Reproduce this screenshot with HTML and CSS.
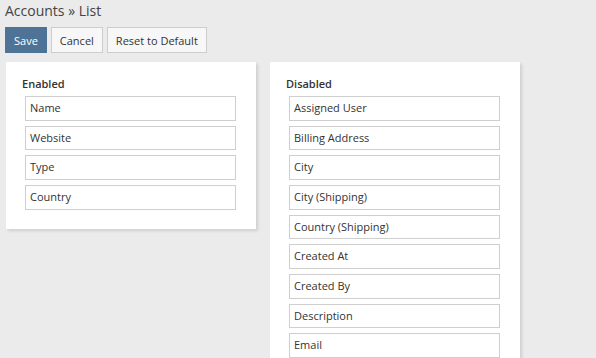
FILE: index.html
```html
<!DOCTYPE html>
<html lang="en">
<head>
  <meta charset="UTF-8" />
  <title>Accounts » List</title>
  <link rel="stylesheet" href="styles.css">
</head>
<body>

  <h1 class="page-title">Accounts &raquo; List</h1>

  <div class="btn-bar">
    <button class="btn btn-primary">Save</button>
    <button class="btn">Cancel</button>
    <button class="btn">Reset to Default</button>
  </div>

  <div class="layout-panels">
    <div class="panel">
      <h5 class="panel-label">Enabled</h5>
      <ul class="field-list">
        <li>Name</li>
        <li>Website</li>
        <li>Type</li>
        <li>Country</li>
      </ul>
    </div>

    <div class="panel panel-long">
      <h5 class="panel-label">Disabled</h5>
      <ul class="field-list">
        <li>Assigned User</li>
        <li>Billing Address</li>
        <li>City</li>
        <li>City (Shipping)</li>
        <li>Country (Shipping)</li>
        <li>Created At</li>
        <li>Created By</li>
        <li>Description</li>
        <li>Email</li>
      </ul>
    </div>
  </div>

</body>
</html>
```

FILE: styles.css
```css
html, body {
  overflow: hidden;
}

body {
  font-family: 'Open Sans', 'DejaVu Sans', sans-serif;
  background-color: #ebebeb;
  color: #333;
  margin: 0;
  font-size: 11px;
}

.page-title {
  margin: 0 0 6px;
  padding: 1px 0 0 5px;
  font-size: 14px;
  font-weight: normal;
  line-height: 20px;
  color: #444;
}

.btn-bar {
  display: flex;
  gap: 4px;
  padding-left: 5px;
}

.btn {
  font-family: inherit;
  font-size: 11px;
  height: 26px;
  padding: 0 8px;
  background-color: #f7f7f7;
  color: #333;
  border: 1px solid #cdcdcd;
  border-radius: 0;
  cursor: pointer;
}

.btn-primary {
  background-color: #4e7396;
  border-color: #4e7396;
  color: #fff;
}

.layout-panels {
  display: flex;
  align-items: flex-start;
  gap: 14px;
  margin: 9px 0 0 6px;
}

.panel {
  background-color: #fff;
  width: 250px;
  box-sizing: border-box;
  padding: 14px 16px 19px;
  box-shadow: 2px 2px 3px rgba(0, 0, 0, 0.12);
}

.panel-long {
  padding-bottom: 40px;
}

.panel-label {
  margin: 0 0 5px;
  font-size: 11px;
  font-weight: 600;
  line-height: 15px;
}

.field-list {
  list-style: none;
  margin: 0;
  padding: 0 4px 0 3px;
  display: flex;
  flex-direction: column;
  gap: 5px;
}

.field-list li {
  height: 24.67px;
  box-sizing: border-box;
  border: 1px solid #cfcfcf;
  padding: 0 4px;
  line-height: 22.67px;
  font-size: 11px;
}
```
